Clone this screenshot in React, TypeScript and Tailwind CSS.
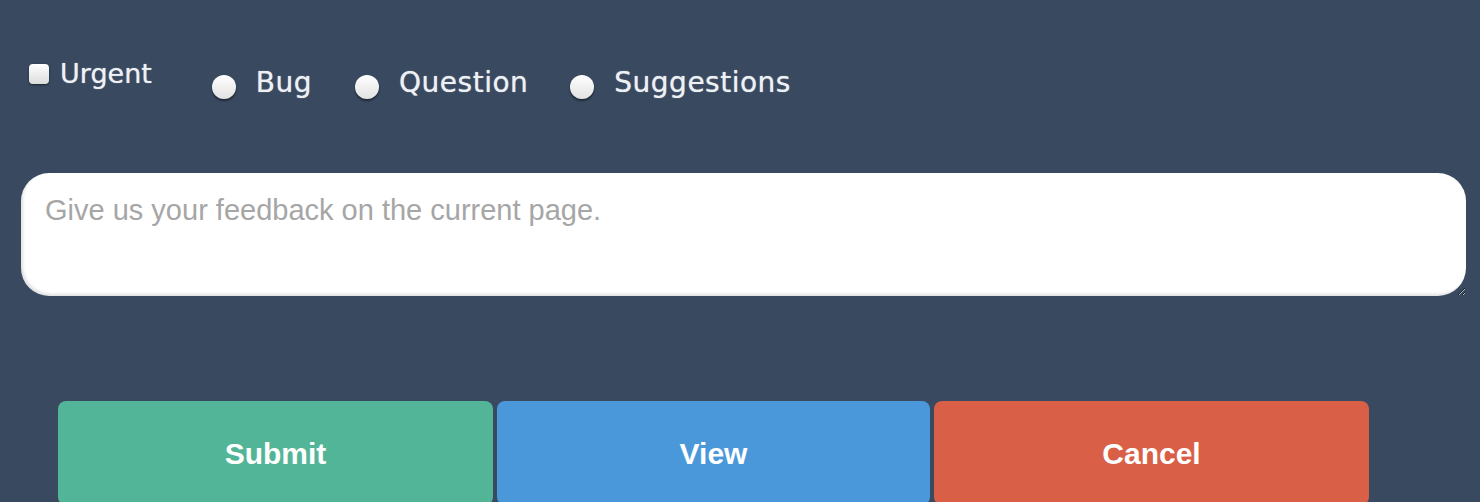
import React, { useState } from "react";

type Kind = "bug" | "question" | "suggestions";

const kinds: { id: Kind; label: string; gap: string }[] = [
  { id: "bug", label: "Bug", gap: "ml-[60px]" },
  { id: "question", label: "Question", gap: "ml-[43px]" },
  { id: "suggestions", label: "Suggestions", gap: "ml-[42px]" },
];

const App = () => {
  const [urgent, setUrgent] = useState<boolean>(false);
  const [kind, setKind] = useState<Kind | null>(null);
  const [feedback, setFeedback] = useState<string>("");

  return (
    <div className="h-[502px] w-full overflow-hidden bg-[#384960] font-['DejaVu_Sans',sans-serif] text-[#eef1f4] [text-shadow:0_0_1px_rgba(255,255,255,0.7)]">
      <div className="flex h-[173px] items-start pl-[29px] pt-[60px]">
        <label className="flex cursor-pointer items-center">
          <span
            onClick={() => setUrgent(!urgent)}
            className="flex h-[20px] w-[20px] items-center justify-center rounded-[4px] bg-gradient-to-b from-white to-[#dcdcdc] shadow-[0_1px_2px_rgba(0,0,0,0.5)]"
          >
            {urgent && <span className="h-[10px] w-[10px] rounded-[2px] bg-[#384960]" />}
          </span>
          <span className="ml-[11px] text-[27px] leading-none">Urgent</span>
        </label>

        {kinds.map((k) => (
          <label
            key={k.id}
            onClick={() => setKind(k.id)}
            className={`mt-[9px] flex cursor-pointer items-start ${k.gap}`}
          >
            <span className="mt-[6px] flex h-[24px] w-[24px] items-center justify-center rounded-full bg-gradient-to-b from-white to-[#e2e2e2] shadow-[0_2px_2px_rgba(0,0,0,0.45)]">
              {kind === k.id && <span className="h-[10px] w-[10px] rounded-full bg-[#384960]" />}
            </span>
            <span className="ml-[20px] text-[28px] leading-none tracking-[0.5px]">{k.label}</span>
          </label>
        ))}
      </div>

      <div className="pl-[21px] [text-shadow:none]">
        <textarea
          value={feedback}
          onChange={(e) => setFeedback(e.target.value)}
          placeholder="Give us your feedback on the current page."
          className="block h-[123px] w-[1445px] rounded-[28px] border-0 bg-white px-[24px] pt-[16px] font-['Liberation_Sans',sans-serif] text-[29px] text-[#555] shadow-[inset_2px_-2px_3px_rgba(0,0,0,0.12)] outline-none placeholder:text-[#a6a6a6]"
        />
      </div>

      <div className="mt-[105px] flex gap-[4px] pl-[58px] font-['Liberation_Sans',sans-serif] text-[30px] font-bold text-white [text-shadow:none]">
        <button className="h-[104px] w-[435px] rounded-[8px] bg-[#53b597]">Submit</button>
        <button className="h-[104px] w-[433px] rounded-[8px] bg-[#4a98d9]">View</button>
        <button className="h-[104px] w-[435px] rounded-[8px] bg-[#d95f47]">Cancel</button>
      </div>
    </div>
  );
};

export default App;
